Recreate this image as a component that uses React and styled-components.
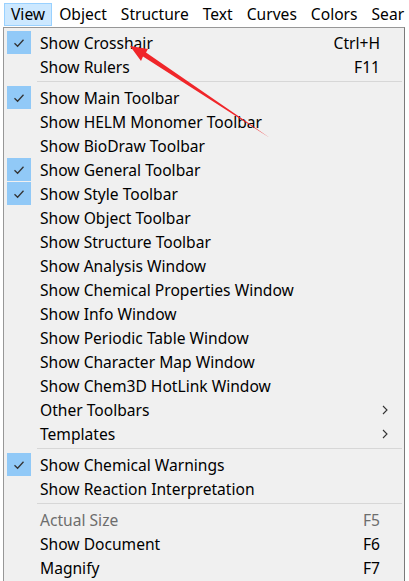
import React from 'react'
import styled, { createGlobalStyle } from 'styled-components'

const GlobalStyle = createGlobalStyle`
  html, body {
    margin: 0;
    padding: 0;
    background: #ffffff;
  }
  body {
    font-family: "Noto Sans", "Open Sans", "Liberation Sans", sans-serif;
    font-size: 15.6px;
    color: #000;
    overflow: hidden;
  }
`

const Screen = styled.div`
  position: relative;
  width: 409px;
  height: 581px;
  overflow: hidden;
  background: #fff;
`

const MenuBar = styled.div`
  display: flex;
  align-items: center;
  height: 27px;
  padding-left: 4px;
  background: #fff;
  overflow: hidden;
`

const BarItem = styled.div`
  box-sizing: border-box;
  flex-shrink: 0;
  height: 23px;
  margin-top: 1px;
  padding: 0 6px;
  display: flex;
  align-items: center;
  white-space: nowrap;
  background: ${p => (p.$open ? '#cce8ff' : 'transparent')};
  border: 1px solid ${p => (p.$open ? '#99d1ff' : 'transparent')};
`

const Menu = styled.div`
  box-sizing: border-box;
  margin-left: 3px;
  width: 402px;
  padding: 3px 2px 40px 2px;
  background: #f0f0f0;
  border: 1px solid #979797;
  border-right-color: #7a7a7a;
`

const Row = styled.div`
  position: relative;
  display: flex;
  align-items: center;
  height: 24px;
  line-height: 24px;
  padding-left: 34px;
  padding-right: 22px;
  margin-top: ${p => (p.$first ? '-1px' : '0')};
  margin-bottom: ${p => (p.$first ? '1px' : '0')};
  color: ${p => (p.$disabled ? '#6d6d6d' : '#000')};
`

const Label = styled.span`
  flex: 1;
  white-space: nowrap;
`

const Shortcut = styled.span`
  white-space: nowrap;
`

const CheckBox = styled.span`
  position: absolute;
  left: 1px;
  top: 0;
  width: 24px;
  height: 23px;
  background: #91c9f7;
  display: flex;
  align-items: center;
  justify-content: center;
`

const Chevron = styled.span`
  position: absolute;
  right: 14px;
  top: 7px;
  display: flex;
`

const Separator = styled.div`
  height: 1px;
  margin: 2px 0 4px 31px;
  background: #d7d7d7;
`

const ArrowLayer = styled.svg`
  position: absolute;
  left: 0;
  top: 0;
  pointer-events: none;
`

const Check = () => (
  <svg width="12" height="10" viewBox="0 0 12 10">
    <path d="M1.5 5.2 L4.6 8.2 L10.5 1.8" fill="none" stroke="#333" strokeWidth="1.3" />
  </svg>
)

const Arrow = () => (
  <svg width="6" height="10" viewBox="0 0 6 10">
    <path d="M1 1 L5 5 L1 9" fill="none" stroke="#333" strokeWidth="1.1" />
  </svg>
)

const sections = [
  [
    { label: 'Show Crosshair', key: 'Ctrl+H', checked: true },
    { label: 'Show Rulers', key: 'F11' },
  ],
  [
    { label: 'Show Main Toolbar', checked: true },
    { label: 'Show HELM Monomer Toolbar' },
    { label: 'Show BioDraw Toolbar' },
    { label: 'Show General Toolbar', checked: true },
    { label: 'Show Style Toolbar', checked: true },
    { label: 'Show Object Toolbar' },
    { label: 'Show Structure Toolbar' },
    { label: 'Show Analysis Window' },
    { label: 'Show Chemical Properties Window' },
    { label: 'Show Info Window' },
    { label: 'Show Periodic Table Window' },
    { label: 'Show Character Map Window' },
    { label: 'Show Chem3D HotLink Window' },
    { label: 'Other Toolbars', sub: true },
    { label: 'Templates', sub: true },
  ],
  [
    { label: 'Show Chemical Warnings', checked: true },
    { label: 'Show Reaction Interpretation' },
  ],
  [
    { label: 'Actual Size', key: 'F5', disabled: true },
    { label: 'Show Document', key: 'F6' },
    { label: 'Magnify', key: 'F7' },
  ],
]

const menus = ['View', 'Object', 'Structure', 'Text', 'Curves', 'Colors', 'Sear']

export default function App() {
  return (
    <Screen>
      <GlobalStyle />
      <MenuBar>
        {menus.map((m, i) => (
          <BarItem key={m} $open={i === 0}>{m}</BarItem>
        ))}
      </MenuBar>
      <Menu>
        {sections.map((items, si) => (
          <React.Fragment key={si}>
            {si > 0 && <Separator />}
            {items.map(it => (
              <Row key={it.label} $disabled={it.disabled}>
                {it.checked && <CheckBox><Check /></CheckBox>}
                <Label>{it.label}</Label>
                {it.key && <Shortcut>{it.key}</Shortcut>}
                {it.sub && <Chevron><Arrow /></Chevron>}
              </Row>
            ))}
          </React.Fragment>
        ))}
      </Menu>
      <ArrowLayer width="409" height="581">
        <polygon
          points="130,46 148,49 146,52.5 270,138 143,56.5 141,61"
          fill="#f0262a"
        />
      </ArrowLayer>
    </Screen>
  )
}
